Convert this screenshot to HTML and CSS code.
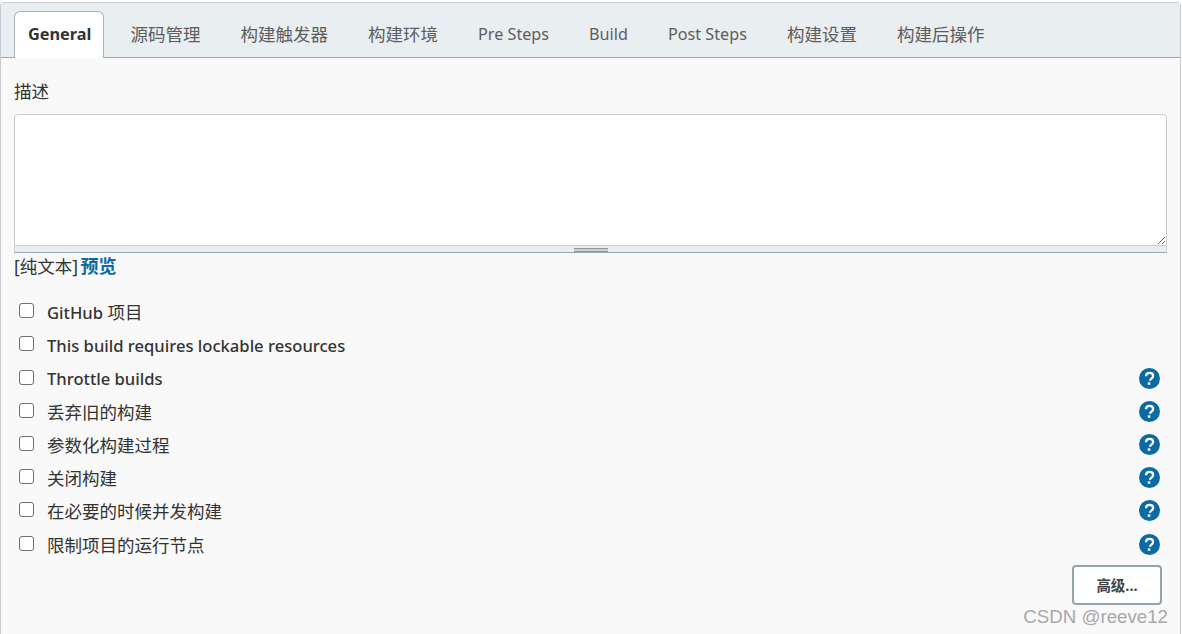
FILE: index.html
```html
<!DOCTYPE html>
<html lang="zh">
<head>
<meta charset="utf-8">
<title>General</title>
<link rel="stylesheet" href="styles.css">
</head>
<body>
<svg class="defs" aria-hidden="true"><symbol id="q" viewBox="0 0 21 21"><circle cx="10.5" cy="10.5" r="10.5" fill="#0b6aa2"/><path d="M7 8.300c.1-2.100 1.500-3.400 3.600-3.400 2.100 0 3.500 1.200 3.500 3 0 1.300-.7 2-1.700 2.700-1 .7-1.400 1.100-1.400 2.200" fill="none" stroke="#fff" stroke-width="2.300"/><rect x="8.800" y="14.300" width="2.500" height="2.500" fill="#fff"/></symbol></svg>
<div class="panel">
  <div class="tabs">
    <div class="tab active">General</div>
    <div class="tab">源码管理</div>
    <div class="tab">构建触发器</div>
    <div class="tab">构建环境</div>
    <div class="tab latin">Pre Steps</div>
    <div class="tab latin">Build</div>
    <div class="tab latin">Post Steps</div>
    <div class="tab">构建设置</div>
    <div class="tab">构建后操作</div>
  </div>
  <div class="content">
    <div class="label">描述</div>
    <div class="editor">
      <textarea class="area"></textarea>
      <div class="grip"><span class="grip-handle"></span></div>
    </div>
    <div class="preview">[纯文本] <a class="preview-link">预览</a></div>
    <div class="options">
      <div class="row"><input class="check" type="checkbox"><span class="text"><span class="en">GitHub</span> 项目</span></div>
      <div class="row"><input class="check" type="checkbox"><span class="text"><span class="en">This build requires lockable resources</span></span></div>
      <div class="row"><input class="check" type="checkbox"><span class="text"><span class="en">Throttle builds</span></span><svg class="help"><use href="#q"/></svg></div>
      <div class="row"><input class="check" type="checkbox"><span class="text">丢弃旧的构建</span><svg class="help"><use href="#q"/></svg></div>
      <div class="row"><input class="check" type="checkbox"><span class="text">参数化构建过程</span><svg class="help"><use href="#q"/></svg></div>
      <div class="row"><input class="check" type="checkbox"><span class="text">关闭构建</span><svg class="help"><use href="#q"/></svg></div>
      <div class="row"><input class="check" type="checkbox"><span class="text">在必要的时候并发构建</span><svg class="help"><use href="#q"/></svg></div>
      <div class="row"><input class="check" type="checkbox"><span class="text">限制项目的运行节点</span><svg class="help"><use href="#q"/></svg></div>
    </div>
    <div class="actions"><button class="advanced" type="button">高级...</button></div>
  </div>
</div>
<div class="watermark">CSDN @reeve12</div>
</body>
</html>
```
FILE: styles.css
```css
* { box-sizing: border-box; }
html, body { margin: 0; height: 100%; overflow: hidden; background: #fff; }
body {
  position: relative;
  padding-top: 2px;
  font-family: "Noto Sans", "Noto Sans CJK SC", sans-serif;
  font-size: 17.5px;
  color: #333;
}
.defs { display: none; }
.panel {
  width: 1181px;
  height: 640px;
  background: #f9f9f9;
  border: 1px solid #c8ccd0;
  border-bottom: 0;
  border-radius: 4px 4px 0 0;
}
.tabs {
  display: flex;
  gap: 13px;
  height: 55px;
  padding: 8px 0 0 13px;
  background: #e9eef1;
  border-bottom: 1px solid #9aa7b0;
}
.tab {
  display: flex;
  align-items: center;
  padding: 0 13.500px 2px;
  height: 47px;
  color: #5d5d5d;
  white-space: nowrap;
}
.latin { font-size: 16.200px; }
.tab.active {
  width: 90px;
  padding: 0 0 2px 13px;
  font-size: 16.300px;
  background: #fff;
  color: #333;
  font-weight: 700;
  border: 1px solid #a8b2ba;
  border-bottom: 0;
  border-radius: 6px 6px 0 0;
}
.content { padding: 0 13px; }
.label { height: 56px; padding-top: 21px; line-height: 24px; }
.editor { width: 1153px; }
.area {
  display: block;
  width: 100%;
  height: 132px;
  background: #fff;
  border: 1px solid #c8ccd0;
  border-radius: 4px 4px 0 0;
  outline: 0;
}
.grip {
  display: flex;
  justify-content: center;
  align-items: flex-end;
  height: 7px;
  background: #e9eef1;
  border: 1px solid #c8d0d6;
  border-top: 0;
  border-bottom: 1px solid #9aa7b0;
}
.grip-handle {
  width: 34px;
  height: 4px;
  border-top: 1px solid #8f9a9f;
  border-bottom: 1px solid #8f9a9f;
  background: #c9cfd2;
}
.preview { height: 42px; padding-top: 1px; line-height: 24px; }
.preview-link { margin-left: -2px; color: #0b6aa2; font-size: 18px; font-weight: 700; }
.options { display: flex; flex-direction: column; }
.row {
  display: flex;
  align-items: center;
  height: 33.220px;
  padding-left: 5px;
}
.check {
  flex: none;
  width: 15px;
  height: 15px;
  margin: 0 13px 2px 0;
  appearance: none;
  background: #fff;
  border: 1px solid #6f6f6f;
  border-radius: 3px;
}
.text { flex: 1; white-space: nowrap; }
.en { font-size: 16.600px; font-weight: 500; }
.help { flex: none; width: 21px; height: 21px; margin-right: 7px; }
.actions { display: flex; justify-content: flex-end; padding: 4px 5px 0 0; }
.advanced {
  width: 90px;
  height: 40px;
  padding: 0;
  background: #fff;
  border: 2px solid #95a3ad;
  border-radius: 4px;
  font: 700 14.500px "Noto Sans", "Noto Sans CJK SC", sans-serif;
  color: #444;
}
.watermark {
  position: absolute;
  right: 14px;
  top: 606px;
  font-family: "Liberation Sans", sans-serif;
  font-size: 18.700px;
  line-height: 22px;
  color: #a8a8a8;
  white-space: nowrap;
}
```
